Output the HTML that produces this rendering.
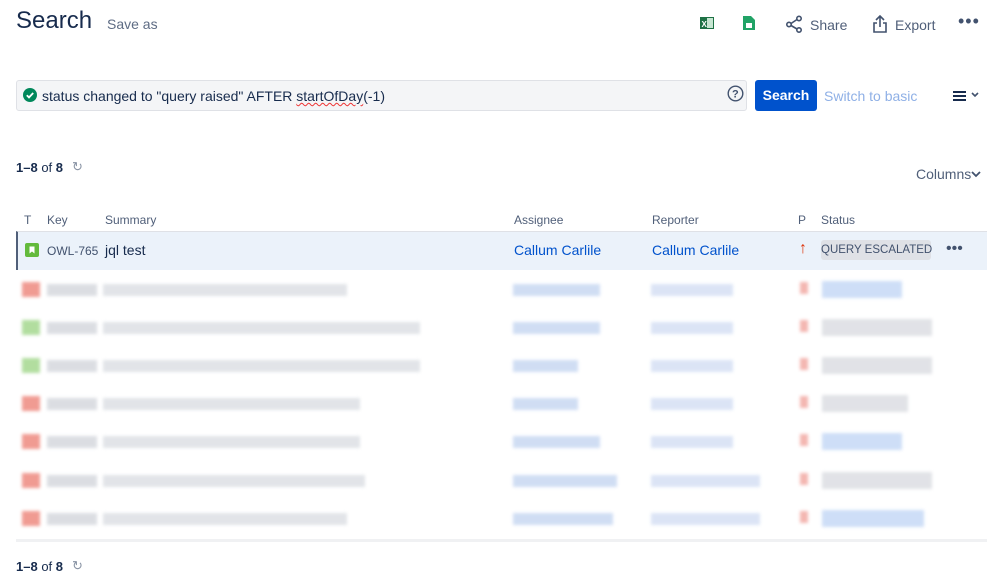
<!DOCTYPE html>
<html><head><meta charset="utf-8"><style>
*{margin:0;padding:0;box-sizing:border-box}
body{width:999px;height:578px;background:#fff;font-family:"Liberation Sans",sans-serif;color:#172b4d;position:relative;overflow:hidden}
.a{position:absolute;white-space:nowrap}
.b{position:absolute;height:12px;filter:blur(1.5px);opacity:.85}
.h{font-size:12px;color:#505f79;top:213px}
</style></head><body>
<div class="a" style="left:16px;top:7px;font-size:24px;color:#172b4d">Search</div>
<div class="a" style="left:107px;top:16px;font-size:14px;color:#5e6c84">Save as</div>
<svg class="a" style="left:700px;top:16px" width="14" height="14"><rect x="0" y="1" width="14" height="12" fill="#1e7145"/><rect x="7" y="2" width="6" height="10" fill="#c7e6d2"/><text x="1.5" y="11" font-size="8" fill="#fff" font-family="Liberation Sans" font-weight="bold">X</text></svg>
<svg class="a" style="left:743px;top:15px" width="12" height="15"><path d="M0 1h8l4 4v10H0z" fill="#21a366"/><rect x="3" y="8" width="6" height="5" fill="#fff"/></svg>
<svg class="a" style="left:785px;top:15px" width="18" height="18" fill="none" stroke="#42526e" stroke-width="1.6"><circle cx="14" cy="3.5" r="2.2"/><circle cx="4" cy="9.5" r="2.2"/><circle cx="14" cy="15" r="2.2"/><path d="M6 8.5l6-4M6 10.5l6 3.5"/></svg>
<div class="a" style="left:810px;top:17px;font-size:14px;color:#505f79">Share</div>
<svg class="a" style="left:872px;top:14px" width="16" height="20" fill="none" stroke="#42526e" stroke-width="1.6"><path d="M8 13V2M4 6l4-4 4 4M5 9H2v9h12V9h-3"/></svg>
<div class="a" style="left:895px;top:17px;font-size:14px;color:#505f79">Export</div>
<div class="a" style="left:958px;top:11px;font-size:18px;color:#42526e;letter-spacing:1px">•••</div>
<div class="a" style="left:16px;top:80px;width:731px;height:31px;background:#f4f5f7;border:1px solid #dfe1e6;border-radius:3px"></div>
<svg class="a" style="left:23px;top:88px" width="14" height="14"><circle cx="7" cy="7" r="7" fill="#00875a"/><path d="M3.8 7.2l2.2 2.2 4.2-4.4" stroke="#fff" stroke-width="1.8" fill="none"/></svg>
<div class="a" style="left:42px;top:88px;font-size:14px;color:#172b4d">status changed to "query raised" AFTER <span style="text-decoration:underline wavy #e33;text-decoration-thickness:1px">startOfDay</span>(-1)</div>
<svg class="a" style="left:727px;top:85px" width="17" height="17" fill="none" stroke="#42526e" stroke-width="1.4"><circle cx="8.5" cy="8.5" r="7.3"/><text x="5" y="12.5" font-size="11" fill="#42526e" stroke="none" font-family="Liberation Sans" font-weight="bold">?</text></svg>
<div class="a" style="left:755px;top:80px;width:62px;height:31px;background:#0052cc;border-radius:3px;color:#fff;font-size:14px;font-weight:bold;text-align:center;line-height:31px">Search</div>
<div class="a" style="left:824px;top:88px;font-size:14px;color:#8fb0e6">Switch to basic</div>
<svg class="a" style="left:952px;top:90px" width="30" height="12"><path d="M1 2h13M1 6h13M1 10h13" stroke="#172b4d" stroke-width="2"/><path d="M20 3l3 3 3-3" stroke="#42526e" stroke-width="1.6" fill="none"/></svg>
<div class="a" style="left:16px;top:160px;font-size:13px;color:#172b4d"><b>1–8</b> of <b>8</b></div>
<div class="a" style="left:72px;top:159px;font-size:13px;color:#8993a4">↻</div>
<div class="a" style="left:916px;top:166px;font-size:14px;color:#505f79">Columns</div>
<svg class="a" style="left:971px;top:170px" width="10" height="8"><path d="M1 2l4 4 4-4" stroke="#42526e" stroke-width="1.8" fill="none"/></svg>
<div class="a h" style="left:24px">T</div><div class="a h" style="left:47px">Key</div><div class="a h" style="left:105px">Summary</div><div class="a h" style="left:514px">Assignee</div><div class="a h" style="left:652px">Reporter</div><div class="a h" style="left:798px">P</div><div class="a h" style="left:821px">Status</div>
<div class="a" style="left:16px;top:231px;width:971px;height:39px;background:#ebf2fa;border-top:1px solid #dfe1e6;border-left:2px solid #505f79"></div>
<svg class="a" style="left:25px;top:243px" width="14" height="14"><rect width="14" height="14" rx="2" fill="#63ba3c"/><path d="M4.5 3.5h5v7l-2.5-2-2.5 2z" fill="#fff"/></svg>
<div class="a" style="left:47px;top:244px;font-size:12px;color:#42526e">OWL-765</div>
<div class="a" style="left:105px;top:242px;font-size:14px;color:#172b4d">jql test</div>
<div class="a" style="left:514px;top:242px;font-size:14px;color:#0052cc">Callum Carlile</div>
<div class="a" style="left:652px;top:242px;font-size:14px;color:#0052cc">Callum Carlile</div>
<div class="a" style="left:799px;top:240px;font-size:16px;color:#de350b">↑</div>
<div class="a" style="left:821px;top:240px;width:110px;height:20px;background:#dfe1e6;border-radius:3px;font-size:11.5px;color:#42526e;line-height:20px;text-align:center">QUERY ESCALATED</div>
<div class="a" style="left:946px;top:240px;font-size:16px;color:#42526e">•••</div>

<div class="b" style="left:22px;top:282px;width:18px;height:15px;background:#ee8a80"></div><div class="b" style="left:47px;top:284px;width:50px;background:#d5d8de"></div><div class="b" style="left:103px;top:284px;width:244px;background:#dde0e5"></div><div class="b" style="left:513px;top:284px;width:87px;background:#c8d8f2"></div><div class="b" style="left:651px;top:284px;width:82px;background:#d5e0f4"></div><div class="b" style="left:800px;top:282px;width:8px;background:#f2aaa4"></div><div class="b" style="left:822px;top:281px;width:80px;height:17px;background:#c6d9f6"></div>
<div class="b" style="left:22px;top:320px;width:18px;height:15px;background:#a5d88f"></div><div class="b" style="left:47px;top:322px;width:50px;background:#d5d8de"></div><div class="b" style="left:103px;top:322px;width:317px;background:#dde0e5"></div><div class="b" style="left:513px;top:322px;width:87px;background:#c8d8f2"></div><div class="b" style="left:651px;top:322px;width:82px;background:#d5e0f4"></div><div class="b" style="left:800px;top:320px;width:8px;background:#f2aaa4"></div><div class="b" style="left:822px;top:319px;width:110px;height:17px;background:#dcdee3"></div>
<div class="b" style="left:22px;top:358px;width:18px;height:15px;background:#a5d88f"></div><div class="b" style="left:47px;top:360px;width:50px;background:#d5d8de"></div><div class="b" style="left:103px;top:360px;width:317px;background:#dde0e5"></div><div class="b" style="left:513px;top:360px;width:65px;background:#c8d8f2"></div><div class="b" style="left:651px;top:360px;width:82px;background:#d5e0f4"></div><div class="b" style="left:800px;top:358px;width:8px;background:#f2aaa4"></div><div class="b" style="left:822px;top:357px;width:110px;height:17px;background:#dcdee3"></div>
<div class="b" style="left:22px;top:396px;width:18px;height:15px;background:#ee8a80"></div><div class="b" style="left:47px;top:398px;width:50px;background:#d5d8de"></div><div class="b" style="left:103px;top:398px;width:257px;background:#dde0e5"></div><div class="b" style="left:513px;top:398px;width:65px;background:#c8d8f2"></div><div class="b" style="left:651px;top:398px;width:82px;background:#d5e0f4"></div><div class="b" style="left:800px;top:396px;width:8px;background:#f2aaa4"></div><div class="b" style="left:822px;top:395px;width:86px;height:17px;background:#dcdee3"></div>
<div class="b" style="left:22px;top:434px;width:18px;height:15px;background:#ee8a80"></div><div class="b" style="left:47px;top:436px;width:50px;background:#d5d8de"></div><div class="b" style="left:103px;top:436px;width:257px;background:#dde0e5"></div><div class="b" style="left:513px;top:436px;width:87px;background:#c8d8f2"></div><div class="b" style="left:651px;top:436px;width:82px;background:#d5e0f4"></div><div class="b" style="left:800px;top:434px;width:8px;background:#f2aaa4"></div><div class="b" style="left:822px;top:433px;width:80px;height:17px;background:#c6d9f6"></div>
<div class="b" style="left:22px;top:473px;width:18px;height:15px;background:#ee8a80"></div><div class="b" style="left:47px;top:475px;width:50px;background:#d5d8de"></div><div class="b" style="left:103px;top:475px;width:262px;background:#dde0e5"></div><div class="b" style="left:513px;top:475px;width:104px;background:#c8d8f2"></div><div class="b" style="left:651px;top:475px;width:109px;background:#d5e0f4"></div><div class="b" style="left:800px;top:473px;width:8px;background:#f2aaa4"></div><div class="b" style="left:822px;top:472px;width:110px;height:17px;background:#dcdee3"></div>
<div class="b" style="left:22px;top:511px;width:18px;height:15px;background:#ee8a80"></div><div class="b" style="left:47px;top:513px;width:50px;background:#d5d8de"></div><div class="b" style="left:103px;top:513px;width:244px;background:#dde0e5"></div><div class="b" style="left:513px;top:513px;width:100px;background:#c8d8f2"></div><div class="b" style="left:651px;top:513px;width:109px;background:#d5e0f4"></div><div class="b" style="left:800px;top:511px;width:8px;background:#f2aaa4"></div><div class="b" style="left:822px;top:510px;width:102px;height:17px;background:#c6d9f6"></div>

<div class="a" style="left:16px;top:539px;width:971px;height:3px;background:#f0f1f3"></div>
<div class="a" style="left:16px;top:559px;font-size:13px;color:#172b4d"><b>1–8</b> of <b>8</b></div>
<div class="a" style="left:72px;top:558px;font-size:13px;color:#8993a4">↻</div>
</body></html>
